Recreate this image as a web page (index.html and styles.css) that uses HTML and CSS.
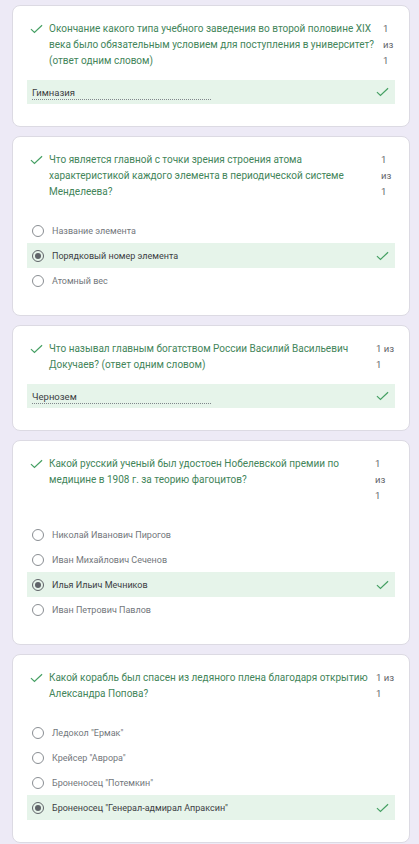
FILE: index.html
```html
<!DOCTYPE html>
<html lang="ru">
<head>
<meta charset="utf-8">
<title>Результаты теста</title>
<link rel="stylesheet" href="styles.css">
</head>
<body>
<main class="page">

  <section class="card">
    <div class="qhead">
      <svg class="qcheck" viewBox="0 0 14 10"><path d="M1 5.2 L4.8 8.8 L13 1" /></svg>
      <p class="qtext">Окончание какого типа учебного заведения во второй половине XIX века было обязательным условием для поступления в университет? (ответ одним словом)</p>
      <span class="score">1 из 1</span>
    </div>
    <div class="answer">
      <span class="field">Гимназия</span>
      <svg class="okcheck" viewBox="0 0 14 10"><path d="M1 5.2 L4.8 8.8 L13 1" /></svg>
    </div>
  </section>

  <section class="card">
    <div class="qhead">
      <svg class="qcheck" viewBox="0 0 14 10"><path d="M1 5.2 L4.8 8.8 L13 1" /></svg>
      <p class="qtext">Что является главной с точки зрения строения атома характеристикой каждого элемента в периодической системе Менделеева?</p>
      <span class="score score--mid">1 из 1</span>
    </div>
    <ul class="options">
      <li class="option"><span class="radio"></span><span class="otext">Название элемента</span></li>
      <li class="option option--correct"><span class="radio radio--on"></span><span class="otext">Порядковый номер элемента</span><svg class="okcheck" viewBox="0 0 14 10"><path d="M1 5.2 L4.8 8.8 L13 1" /></svg></li>
      <li class="option"><span class="radio"></span><span class="otext">Атомный вес</span></li>
    </ul>
  </section>

  <section class="card">
    <div class="qhead">
      <svg class="qcheck" viewBox="0 0 14 10"><path d="M1 5.2 L4.8 8.8 L13 1" /></svg>
      <p class="qtext">Что называл главным богатством России Василий Васильевич Докучаев? (ответ одним словом)</p>
      <span class="score score--wide">1 из 1</span>
    </div>
    <div class="answer">
      <span class="field">Чернозем</span>
      <svg class="okcheck" viewBox="0 0 14 10"><path d="M1 5.2 L4.8 8.8 L13 1" /></svg>
    </div>
  </section>

  <section class="card">
    <div class="qhead">
      <svg class="qcheck" viewBox="0 0 14 10"><path d="M1 5.2 L4.8 8.8 L13 1" /></svg>
      <p class="qtext">Какой русский ученый был удостоен Нобелевской премии по медицине в 1908 г. за теорию фагоцитов?</p>
      <span class="score score--inset">1 из 1</span>
    </div>
    <ul class="options">
      <li class="option"><span class="radio"></span><span class="otext">Николай Иванович Пирогов</span></li>
      <li class="option"><span class="radio"></span><span class="otext">Иван Михайлович Сеченов</span></li>
      <li class="option option--correct"><span class="radio radio--on"></span><span class="otext">Илья Ильич Мечников</span><svg class="okcheck" viewBox="0 0 14 10"><path d="M1 5.2 L4.8 8.8 L13 1" /></svg></li>
      <li class="option"><span class="radio"></span><span class="otext">Иван Петрович Павлов</span></li>
    </ul>
  </section>

  <section class="card">
    <div class="qhead">
      <svg class="qcheck" viewBox="0 0 14 10"><path d="M1 5.2 L4.8 8.8 L13 1" /></svg>
      <p class="qtext">Какой корабль был спасен из ледяного плена благодаря открытию Александра Попова?</p>
      <span class="score score--wide">1 из 1</span>
    </div>
    <ul class="options">
      <li class="option"><span class="radio"></span><span class="otext">Ледокол "Ермак"</span></li>
      <li class="option"><span class="radio"></span><span class="otext">Крейсер "Аврора"</span></li>
      <li class="option"><span class="radio"></span><span class="otext">Броненосец "Потемкин"</span></li>
      <li class="option option--correct"><span class="radio radio--on"></span><span class="otext">Броненосец "Генерал-адмирал Апраксин"</span><svg class="okcheck" viewBox="0 0 14 10"><path d="M1 5.2 L4.8 8.8 L13 1" /></svg></li>
    </ul>
  </section>

</main>
</body>
</html>
```

FILE: styles.css
```css
* {
  box-sizing: border-box;
}

html, body {
  margin: 0;
  padding: 0;
}

body {
  background: #edeaf6;
  font-family: Roboto, "Noto Sans", Arial, sans-serif;
  color: #202124;
}

.page {
  display: flex;
  flex-direction: column;
  gap: 9px;
  padding: 5px 9px 0 12px;
}

.card {
  background: #ffffff;
  border: 1px solid #dcdae3;
  border-radius: 8px;
  padding: 15px 14px 22px 14px;
}

.qhead {
  display: flex;
  align-items: flex-start;
}

.qcheck {
  flex: none;
  width: 13px;
  height: 10px;
  margin: 3px 6px 0 3px;
}

.qcheck path,
.okcheck path {
  fill: none;
  stroke: #46a064;
  stroke-width: 1.3;
}

.qtext {
  flex: 1;
  margin: 0;
  font-size: 10px;
  line-height: 16px;
  color: #43855a;
}

.score {
  flex: none;
  width: 12px;
  margin-left: 8px;
  font-size: 9.5px;
  line-height: 16px;
  color: #5f6368;
}

.score--mid {
  margin-right: 2px;
}

.score--inset {
  margin-right: 8px;
}

.score--wide {
  width: 18px;
  margin-right: 1px;
}

.answer {
  margin-top: 11px;
  height: 24px;
  background: #e6f4ea;
  display: flex;
  align-items: center;
  justify-content: space-between;
  padding: 0 6px 0 5px;
}

.field {
  display: block;
  width: 179px;
  font-size: 9.5px;
  line-height: 13px;
  color: #3c4043;
  border-bottom: 1px dotted #80868b;
  margin-top: 1px;
}

.okcheck {
  flex: none;
  width: 13px;
  height: 10px;
}

.options {
  list-style: none;
  margin: 18px 0 0 0;
  padding: 0;
}

.option {
  height: 25px;
  display: flex;
  align-items: center;
  padding: 0 6px 0 5px;
}

.option--correct {
  background: #e6f4ea;
}

.radio {
  flex: none;
  width: 12px;
  height: 12px;
  border: 1.2px solid #8a8e93;
  border-radius: 50%;
  display: flex;
  align-items: center;
  justify-content: center;
  margin-right: 8px;
}

.radio--on {
  border-color: #5f6368;
}

.radio--on::after {
  content: "";
  width: 6px;
  height: 6px;
  border-radius: 50%;
  background: #5f6368;
}

.otext {
  flex: 1;
  font-size: 9px;
  color: #73777c;
}

.option--correct .otext {
  color: #3c4043;
}
```
